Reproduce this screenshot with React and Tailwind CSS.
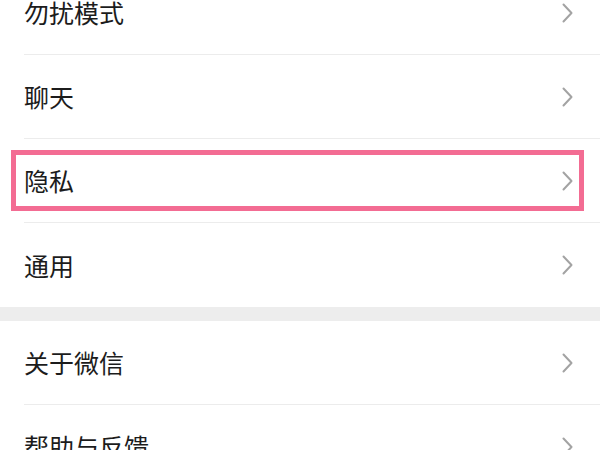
import React from 'react';

function Chevron() {
  return (
    <svg width="11" height="20" viewBox="0 0 11 20" fill="none">
      <polyline points="1.5,1.5 9.5,10 1.5,18.5" stroke="#a3a3a3" strokeWidth="2" strokeLinecap="round" strokeLinejoin="round" />
    </svg>
  );
}

function Row({ label, divider = true, highlight = false }) {
  return (
    <div className="relative h-[84px] flex pl-6 bg-white">
      <div className={`flex-1 flex items-center justify-between pr-[27px] ${divider ? 'border-b border-[#ececec]' : ''}`}>
        <span className="text-[25px] leading-none text-[#1c1c1c]">{label}</span>
        <Chevron />
      </div>
      {highlight && (
        <div className="absolute left-[11px] top-[11px] w-[573px] h-[61px] border-[5px] border-[#f36c93]" />
      )}
    </div>
  );
}

export default function App() {
  return (
    <div
      className="w-[600px] h-[450px] overflow-hidden bg-white"
      style={{ fontFamily: '"Noto Sans CJK SC", "Noto Sans", sans-serif' }}
    >
      <div className="flex flex-col -mt-[29px]">
        <Row label="勿扰模式" />
        <Row label="聊天" />
        <Row label="隐私" highlight />
        <Row label="通用" divider={false} />
        <div className="h-[14px] bg-[#ededed]" />
        <Row label="关于微信" />
        <Row label="帮助与反馈" />
      </div>
    </div>
  );
}
